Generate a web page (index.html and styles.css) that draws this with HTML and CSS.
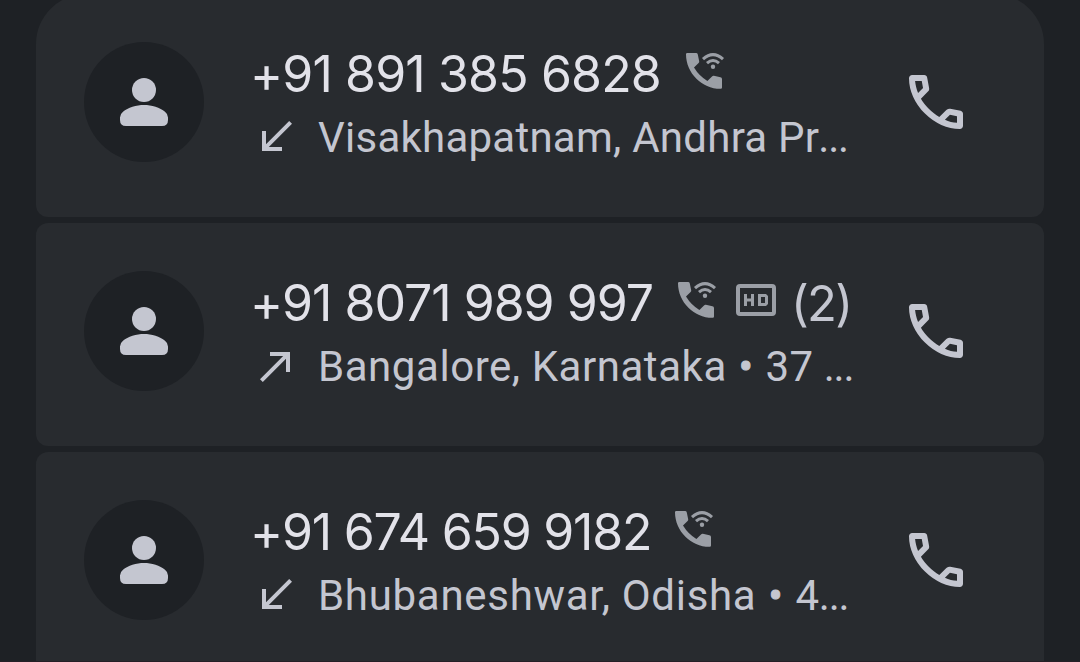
FILE: index.html
```
<!DOCTYPE html>
<html lang="en">
<head>
  <meta charset="utf-8">
  <title>Recent calls</title>
  <link rel="stylesheet" href="styles.css">
</head>
<body>
  <!-- shared icons -->
  <svg class="icon-defs">
    <symbol id="person" viewBox="0 0 24 24">
      <circle cx="12" cy="8" r="4"/>
      <path d="M4 18v-.8q0-1.2 1-1.95C6.6 13.9 9.5 13 12 13s5.4.9 7 2.25q1 .75 1 1.95V18q0 2-2 2H6q-2 0-2-2z"/>
    </symbol>
    <symbol id="call" viewBox="0 -960 960 960">
      <path d="M798-120q-125 0-247-54.5T329-329Q229-429 174.5-551T120-798q0-18 12-30t30-12h162q14 0 25 9.5t13 22.5l26 140q2 16-1 27t-11 19l-97 98q20 37 47.5 71.5T387-386q31 31 65 57.5t72 48.5l94-94q9-9 23.5-13.5T670-390l138 28q14 4 23 14.5t9 23.5v162q0 18-12 30t-30 12ZM241-600l66-66-17-94h-89q5 41 14 81t26 79Zm358 358q39 17 79.5 27t81.5 13v-88l-94-19-67 67Z"/>
    </symbol>
    <symbol id="wifi-call" viewBox="0 0 24 24">
      <path d="M3.6 3H8q.75 0 .9.7l.7 3.400q.1.550-.3.950L7 10.300Q9.600 14.600 13.700 17l2.300-2.300q.4-.400.950-.300l3.250.700q.8.150.8.900v4.300q0 .6-.6.6C11 21 3 13 3 3.600q0-.6.6-.6z"/>
      <circle cx="16.5" cy="9.900" r="1.100"/>
      <path class="wave" d="M11.500 6.100q5-4.600 10 0M13.500 8.100q3-2.700 6 0"/>
    </symbol>
    <symbol id="hd" viewBox="0 0 24 24">
      <path fill-rule="evenodd" d="M4 4h16a2 2 0 0 1 2 2v12a2 2 0 0 1-2 2H4a2 2 0 0 1-2-2V6a2 2 0 0 1 2-2zm0 2v12h16V6zM6 9h1.500v2.200h2V9H11v6H9.500v-2.300h-2V15H6zM13 9h4l1 1v4l-1 1h-4zm1.500 1.500v3h2v-3z"/>
    </symbol>
    <symbol id="received" viewBox="0 0 24 24">
      <path d="M20 5.410L18.590 4 7 15.590V9H5v10h10v-2H8.410z"/>
    </symbol>
    <symbol id="made" viewBox="0 0 24 24">
      <path d="M9 5v2h6.590L4 18.590 5.410 20 17 8.410V15h2V5z"/>
    </symbol>
  </svg>

  <div class="call-list">
    <div class="call-card first">
      <div class="avatar"><svg><use href="#person"/></svg></div>
      <div class="call-info">
        <div class="call-title">
          <span class="number">+91 891 385 6828</span>
          <svg class="badge"><use href="#wifi-call"/></svg>
        </div>
        <div class="call-detail">
          <svg class="direction"><use href="#received"/></svg>
          <span class="place">Visakhapatnam, Andhra Pr<span class="more">...</span></span>
        </div>
      </div>
      <svg class="call-button"><use href="#call"/></svg>
    </div>

    <div class="call-card second">
      <div class="avatar"><svg><use href="#person"/></svg></div>
      <div class="call-info">
        <div class="call-title">
          <span class="number">+91 8071 989 997</span>
          <svg class="badge"><use href="#wifi-call"/></svg>
          <svg class="badge"><use href="#hd"/></svg>
          <span class="count">(2)</span>
        </div>
        <div class="call-detail">
          <svg class="direction"><use href="#made"/></svg>
          <span class="place">Bangalore, Karnataka <span class="dot">•</span> 37 <span class="more">...</span></span>
        </div>
      </div>
      <svg class="call-button"><use href="#call"/></svg>
    </div>

    <div class="call-card third">
      <div class="avatar"><svg><use href="#person"/></svg></div>
      <div class="call-info">
        <div class="call-title">
          <span class="number">+91 674 659 9182</span>
          <svg class="badge"><use href="#wifi-call"/></svg>
        </div>
        <div class="call-detail">
          <svg class="direction"><use href="#received"/></svg>
          <span class="place">Bhubaneshwar, Odisha <span class="dot">•</span> 4<span class="more">...</span></span>
        </div>
      </div>
      <svg class="call-button"><use href="#call"/></svg>
    </div>
  </div>
</body>
</html>
```
FILE: styles.css
```
* {
    box-sizing: border-box;
}

html, body {
    height: 100%;
    margin: 0;
    overflow: hidden;
    background-color: #1e2125;
}

body {
    font-family: Inter, "Liberation Sans", sans-serif;
    color: #e2e2e9;
}

.icon-defs {
    display: none;
}

svg {
    display: block;
    flex: none;
    fill: #c4c6d0;
}

.call-list {
    display: flex;
    flex-direction: column;
    gap: 6px;
    height: 668px;
    margin-top: -6px;
    padding: 0 36px;
    border-bottom: 1px solid #241f26;
    overflow: hidden;
}

.call-card {
    display: flex;
    align-items: flex-start;
    flex: none;
    height: 223px;
    padding: 48px 72px 0 48px;
    border-radius: 12px;
    background-color: #282b2f;
}

.call-card.first {
    border-radius: 50px 50px 12px 12px;
}

.avatar {
    display: flex;
    justify-content: center;
    align-items: center;
    flex: none;
    width: 120px;
    height: 120px;
    border-radius: 50%;
    background-color: #1e2125;
}

.avatar svg {
    width: 72px;
    height: 72px;
}

.call-info {
    flex: 1;
    min-width: 0;
    padding-left: 48px;
}

.call-title {
    display: flex;
    align-items: center;
    height: 64px;
    white-space: nowrap;
}

.number {
    margin-left: -2px;
    font-size: 50px;
}

.first .number {
    letter-spacing: -0.85px;
}

.second .number {
    letter-spacing: -1px;
}

.third .number {
    letter-spacing: -1.2px;
}

.badge {
    width: 48px;
    height: 48px;
    margin: -6px 0 0 19px;
    fill: #9b9fa6;
}

.third .badge {
    margin-left: 18px;
}

.badge + .badge {
    margin-left: 12px;
}

.wave {
    fill: none;
    stroke: #9b9fa6;
    stroke-width: 1.5;
}

.count {
    margin-left: 11px;
    font-size: 49px;
    letter-spacing: -1.8px;
    color: #c4c6d0;
}

.call-detail {
    display: flex;
    align-items: center;
    height: 62px;
    white-space: nowrap;
}

.direction {
    width: 48px;
    height: 48px;
}

.place {
    margin-left: 18px;
    font-family: Roboto, sans-serif;
    font-size: 42px;
    color: #c4c6d0;
}

.first .place {
    letter-spacing: 0.25px;
}

.second .place {
    letter-spacing: 0.55px;
}

.third .place {
    letter-spacing: 0.7px;
}

.dot {
    margin: 0 1px;
    -webkit-text-stroke: 1px #c4c6d0;
}

.place .more {
    margin-left: -1px;
    letter-spacing: -1.2px;
}

.call-button {
    width: 72px;
    height: 72px;
    margin-top: 24px;
}
```
